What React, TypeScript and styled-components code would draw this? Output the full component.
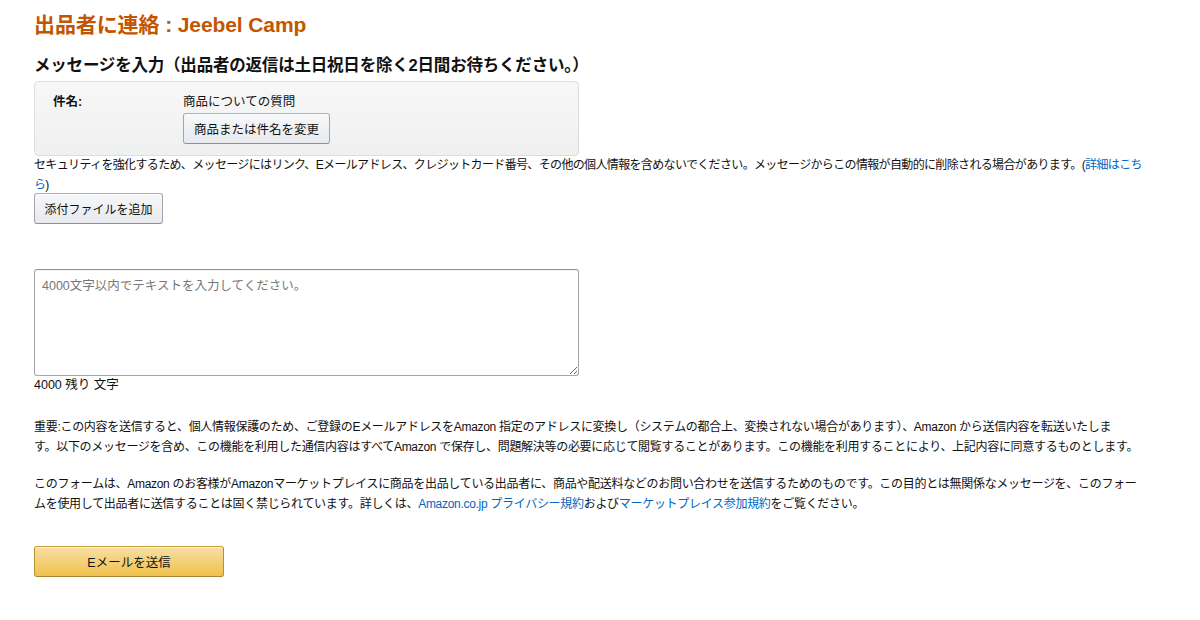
import React from "react";
import styled, { createGlobalStyle } from "styled-components";

const Global = createGlobalStyle`
  html, body { margin: 0; padding: 0; background: #fff; }
  body {
    font-family: "Liberation Sans", "Noto Sans CJK JP", sans-serif;
    color: #111;
  }
`;

const Page = styled.div`
  width: 1132px;
  padding: 10px 34px 40px;
  display: flex;
  flex-direction: column;
  align-items: flex-start;
`;

const Title = styled.h1`
  margin: 0;
  font-size: 21px;
  line-height: 30px;
  font-weight: 700;
  letter-spacing: -0.1px;
  color: #c45500;
`;

const SubTitle = styled.h2`
  margin: 13px 0 0;
  font-size: 16.5px;
  line-height: 24px;
  font-weight: 700;
  letter-spacing: -0.2px;
  color: #111;
`;

const SubjectBox = styled.div`
  margin-top: 4px;
  box-sizing: border-box;
  width: 545px;
  height: 75px;
  border: 1px solid #ddd;
  border-radius: 4px;
  background: linear-gradient(#f7f7f7, #eff0f0);
  display: grid;
  grid-template-columns: 130px 1fr;
  padding: 11px 18px;
`;

const Label = styled.div`
  font-size: 12.5px;
  font-weight: 700;
  line-height: 18px;
`;

const ValueCol = styled.div`
  display: flex;
  flex-direction: column;
  align-items: flex-start;
  font-size: 12.5px;
  line-height: 18px;
  color: #111;
`;

const Button = styled.button<{ $primary?: boolean }>`
  box-sizing: border-box;
  height: 31px;
  padding: 0;
  white-space: nowrap;
  text-align: center;
  font-family: "Liberation Sans", "Noto Sans CJK JP", sans-serif;
  font-size: 12.5px;
  color: #111;
  border-radius: 3px;
  border: 1px solid;
  border-color: ${(p) => (p.$primary ? "#c89f3c #b9912f #a88734" : "#adb1b8 #a2a6ac #8d9096")};
  background: ${(p) =>
    p.$primary ? "linear-gradient(#f7dfa5, #f0c14b)" : "linear-gradient(#f7f8fa, #e7e9ec)"};
  box-shadow: 0 1px 0 rgba(255, 255, 255, 0.6) inset;
  cursor: pointer;
`;

const ChangeButton = styled(Button)`
  margin-top: 2px;
  width: 147px;
`;

const SmallText = styled.p`
  margin: 0;
  font-size: 12px;
  line-height: 20px;
  color: #111;
  letter-spacing: -0.65px;
`;

const Notice = styled(SmallText)`
  margin-top: -1px;
  width: 1120px;
`;

const Link = styled.a`
  color: #0066c0;
  text-decoration: none;
`;

const AttachButton = styled(Button)`
  margin-top: -2px;
  width: 129px;
  font-size: 12px;
`;

const MessageArea = styled.textarea`
  margin-top: 45px;
  box-sizing: border-box;
  width: 545px;
  height: 107px;
  border: 1px solid #a6a6a6;
  border-top-color: #949494;
  border-radius: 3px;
  padding: 7px 7px;
  font-family: "Liberation Sans", "Noto Sans CJK JP", sans-serif;
  font-size: 12.5px;
  line-height: 18px;
  resize: vertical;
  box-shadow: 0 1px 0 rgba(0, 0, 0, 0.05) inset;
  &::placeholder { color: #767676; }
`;

const Counter = styled.div`
  font-size: 12.5px;
  line-height: 18px;
  color: #111;
`;

const Legal = styled(SmallText)`
  margin-top: 24px;
  width: 1110px;
  line-height: 19.5px;
  letter-spacing: -0.3px;
`;

const Legal2 = styled(Legal)`
  margin-top: 18px;
  width: 1108px;
`;

const SubmitButton = styled(Button)`
  margin-top: 32px;
  width: 190px;
  height: 31px;
`;

export default function App() {
  return (
    <>
      <Global />
      <Page>
        <Title>出品者に連絡 : Jeebel Camp</Title>
        <SubTitle>メッセージを入力（出品者の返信は土日祝日を除く2日間お待ちください。）</SubTitle>
        <SubjectBox>
          <Label>件名:</Label>
          <ValueCol>
            <span>商品についての質問</span>
            <ChangeButton>商品または件名を変更</ChangeButton>
          </ValueCol>
        </SubjectBox>
        <Notice>
          セキュリティを強化するため、メッセージにはリンク、Eメールアドレス、クレジットカード番号、その他の個人情報を含めないでください。メッセージからこの情報が自動的に削除される場合があります。(
          <Link href="#">詳細はこちら</Link>)
        </Notice>
        <AttachButton>添付ファイルを追加</AttachButton>
        <MessageArea placeholder="4000文字以内でテキストを入力してください。" />
        <Counter>4000 残り 文字</Counter>
        <Legal>
          重要:この内容を送信すると、個人情報保護のため、ご登録のEメールアドレスをAmazon 指定のアドレスに変換し（システムの都合上、変換されない場合があります）、Amazon から送信内容を転送いたしま
          <br />
          す。以下のメッセージを含め、この機能を利用した通信内容はすべてAmazon で保存し、問題解決等の必要に応じて閲覧することがあります。この機能を利用することにより、上記内容に同意するものとします。
        </Legal>
        <Legal2>
          このフォームは、Amazon のお客様がAmazonマーケットプレイスに商品を出品している出品者に、商品や配送料などのお問い合わせを送信するためのものです。この目的とは無関係なメッセージを、このフォームを使用して出品者に送信することは固く禁じられています。詳しくは、
          <Link href="#">Amazon.co.jp プライバシー規約</Link>および<Link href="#">マーケットプレイス参加規約</Link>をご覧ください。
        </Legal2>
        <SubmitButton $primary>Eメールを送信</SubmitButton>
      </Page>
    </>
  );
}
